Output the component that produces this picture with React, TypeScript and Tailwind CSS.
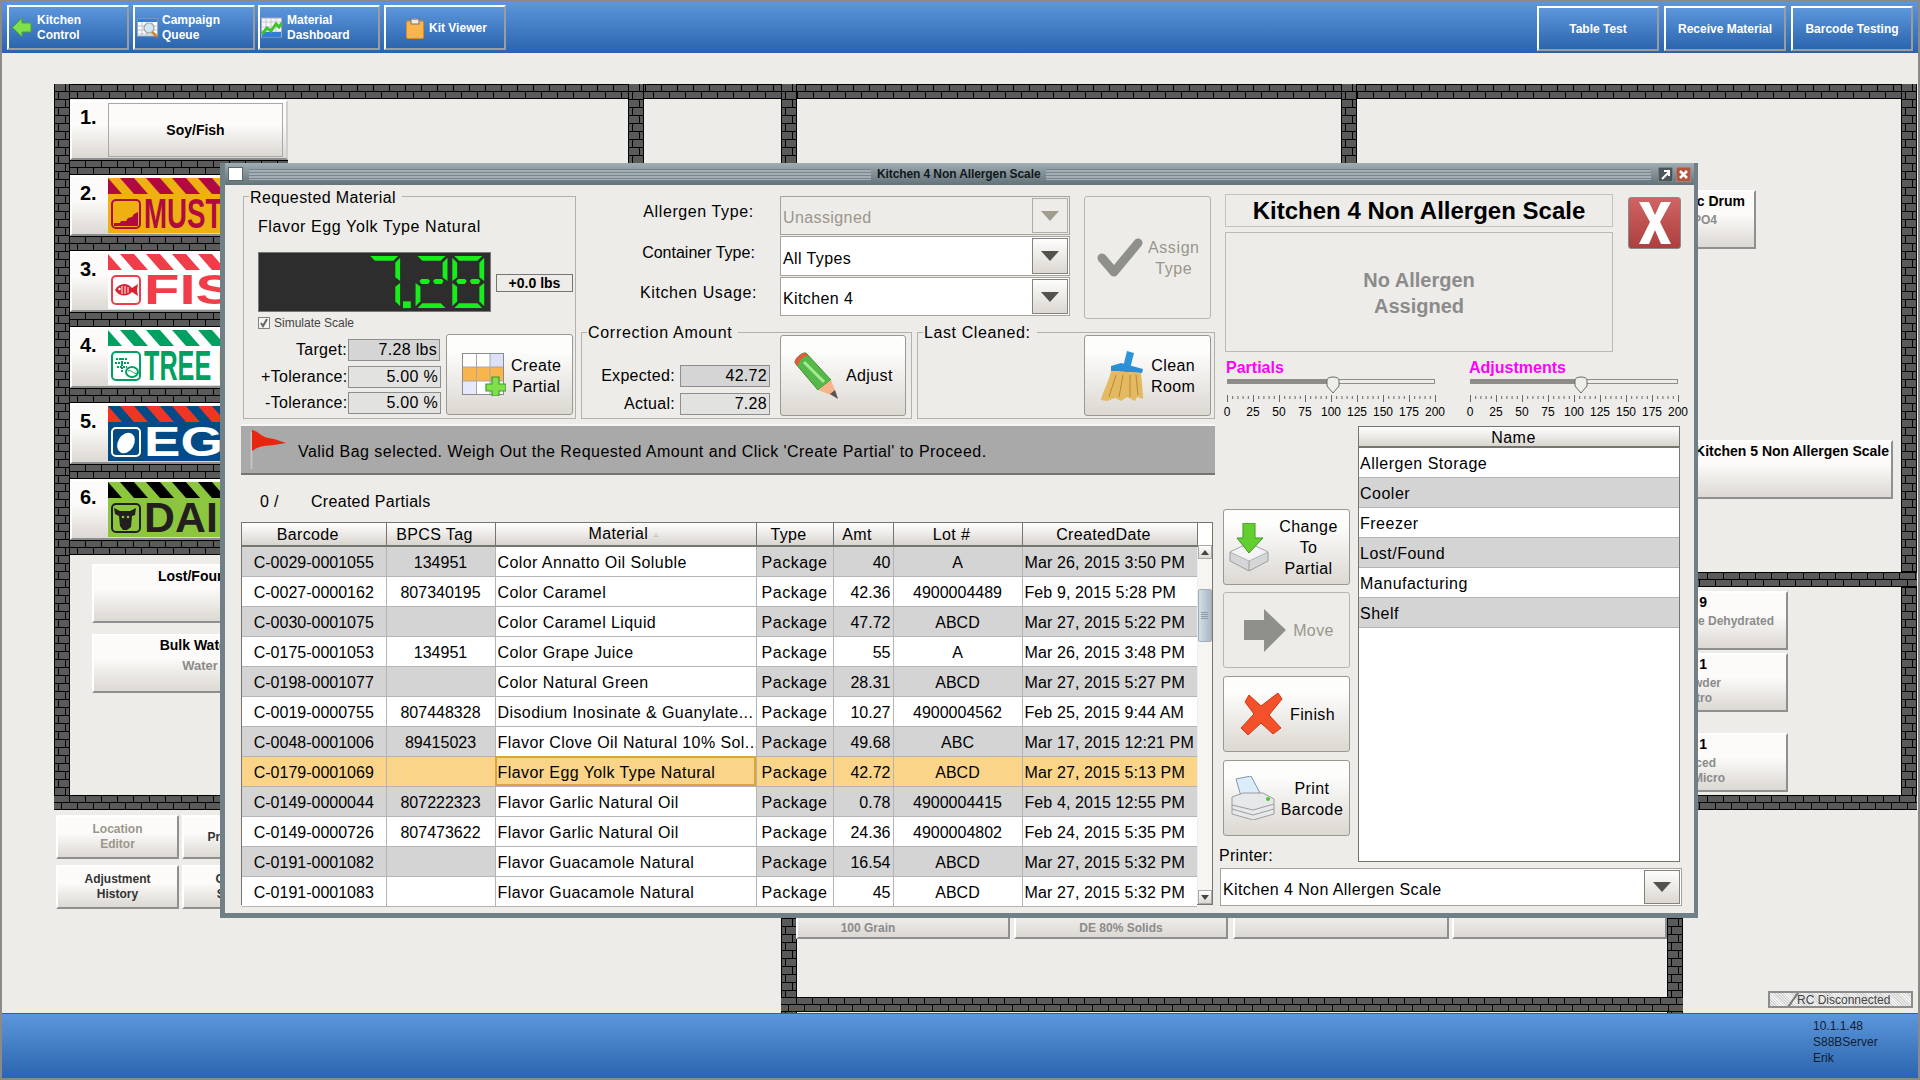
import type { ReactNode } from 'react'

const navGradient = 'bg-gradient-to-b from-[#5c96db] to-[#2b65ae]'
const raised = 'bg-gradient-to-b from-[#fcfbf9] from-40% to-[#dcd8d3]'

const tableRows = [
  ['C-0029-0001055', '134951', 'Color Annatto Oil Soluble', 'Package', '40', 'A', 'Mar 26, 2015 3:50 PM'],
  ['C-0027-0000162', '807340195', 'Color Caramel', 'Package', '42.36', '4900004489', 'Feb 9, 2015 5:28 PM'],
  ['C-0030-0001075', '', 'Color Caramel Liquid', 'Package', '47.72', 'ABCD', 'Mar 27, 2015 5:22 PM'],
  ['C-0175-0001053', '134951', 'Color Grape Juice', 'Package', '55', 'A', 'Mar 26, 2015 3:48 PM'],
  ['C-0198-0001077', '', 'Color Natural Green', 'Package', '28.31', 'ABCD', 'Mar 27, 2015 5:27 PM'],
  ['C-0019-0000755', '807448328', 'Disodium Inosinate & Guanylate...', 'Package', '10.27', '4900004562', 'Feb 25, 2015 9:44 AM'],
  ['C-0048-0001006', '89415023', 'Flavor Clove Oil Natural 10% Sol...', 'Package', '49.68', 'ABC', 'Mar 17, 2015 12:21 PM'],
  ['C-0179-0001069', '', 'Flavor Egg Yolk Type Natural', 'Package', '42.72', 'ABCD', 'Mar 27, 2015 5:13 PM'],
  ['C-0149-0000044', '807222323', 'Flavor Garlic Natural Oil', 'Package', '0.78', '4900004415', 'Feb 4, 2015 12:55 PM'],
  ['C-0149-0000726', '807473622', 'Flavor Garlic Natural Oil', 'Package', '24.36', '4900004802', 'Feb 24, 2015 5:35 PM'],
  ['C-0191-0001082', '', 'Flavor Guacamole Natural', 'Package', '16.54', 'ABCD', 'Mar 27, 2015 5:32 PM'],
  ['C-0191-0001083', '', 'Flavor Guacamole Natural', 'Package', '45', 'ABCD', 'Mar 27, 2015 5:32 PM'],
]

const storageNames = ['Allergen Storage', 'Cooler', 'Freezer', 'Lost/Found', 'Manufacturing', 'Shelf']

function Wall({ className, vertical }: { className: string; vertical?: boolean }) {
  return (
    <svg className={className}>
      <rect width="100%" height="100%" fill={vertical ? 'url(#brick-v)' : 'url(#brick-h)'} />
    </svg>
  )
}

function BrickDefs() {
  return (
    <svg className="absolute h-0 w-0">
      <defs>
        <pattern id="brick-h" width="16" height="15" patternUnits="userSpaceOnUse">
          <rect width="16" height="15" fill="#000" />
          <rect x="0" y="1" width="15" height="6" fill="#5a5a5a" />
          <rect x="0" y="8" width="7" height="6" fill="#5a5a5a" />
          <rect x="8" y="8" width="8" height="6" fill="#5a5a5a" />
        </pattern>
        <pattern id="brick-v" width="16" height="16" patternUnits="userSpaceOnUse">
          <rect width="16" height="16" fill="#000" />
          <rect x="1" y="0" width="10" height="7" fill="#5a5a5a" />
          <rect x="12" y="0" width="3" height="7" fill="#5a5a5a" />
          <rect x="1" y="8" width="3" height="7" fill="#5a5a5a" />
          <rect x="5" y="8" width="10" height="7" fill="#5a5a5a" />
        </pattern>
      </defs>
    </svg>
  )
}

// top bar icons
function BackIcon() {
  return (
    <svg width="20" height="21" viewBox="0 0 20 21" className="shrink-0">
      <path d="M10 1 L0.5 10.5 L10 20 L10 15 L19 15 L19 6 L10 6 Z" fill="#7fe04a" stroke="#4aa52a" />
    </svg>
  )
}

function QueueIcon() {
  return (
    <svg width="22" height="20" viewBox="0 0 22 20" className="shrink-0">
      <rect x="0.5" y="1" width="20" height="17" fill="#fff" stroke="#9ab" />
      <rect x="0.5" y="1" width="20" height="3" fill="#2e7fe0" />
      <path d="M5 4V18M10 4V18M15 4V18M1 8H20M1 12H20M1 16H20" stroke="#b8bfd0" />
      <circle cx="12" cy="10" r="5" fill="#cfe6fa" stroke="#a8a090" strokeWidth="1.2" />
      <path d="M15.5 14 L20 19" stroke="#d97b18" strokeWidth="2.5" />
    </svg>
  )
}

function ChartIcon() {
  return (
    <svg width="22" height="21" viewBox="0 0 22 21" className="shrink-0">
      <rect x="0.5" y="1" width="20" height="19" fill="#f6f6f6" stroke="#aab" />
      <path d="M5 1V20M10 1V20M15 1V20M1 5H20M1 10H20M1 15H20" stroke="#c5c8d0" />
      <path d="M1 15 H20 V20 H1 Z" fill="#2f7fd8" />
      <path d="M1 17 L6 11 L10 14 L15 7 L18 10 L21 6" fill="none" stroke="#3ec22e" strokeWidth="3" />
    </svg>
  )
}

function ClipboardIcon() {
  return (
    <svg width="18" height="21" viewBox="0 0 18 21" className="shrink-0">
      <rect x="0.5" y="3" width="17" height="17.5" rx="1.5" fill="#f9b64e" stroke="#d98a22" />
      <rect x="5" y="1" width="8" height="5" fill="#ececec" stroke="#777" />
      <rect x="7.5" y="0" width="3" height="2" fill="#999" />
    </svg>
  )
}

function TopButton({ className, children }: { className: string; children: ReactNode }) {
  return (
    <div
      className={`flex h-[45px] items-center border-2 border-t-white border-l-white border-r-[#9c9c9c] border-b-[#9c9c9c] text-[12px] leading-[15px] font-bold text-white ${navGradient} ${className}`}
    >
      {children}
    </div>
  )
}

function TopBar() {
  return (
    <div className={`flex h-[51px] shrink-0 border-b border-[#2f5fa8] pt-[3px] pl-[5px] ${navGradient}`}>
      <TopButton className="w-[122px] gap-[5px] pl-[3px]">
        <BackIcon />
        <span>Kitchen<br />Control</span>
      </TopButton>
      <TopButton className="ml-[4px] w-[122px] gap-[3px] pl-[2px]">
        <QueueIcon />
        <span>Campaign<br />Queue</span>
      </TopButton>
      <TopButton className="ml-[3px] w-[122px] gap-[4px] pl-[1px]">
        <ChartIcon />
        <span>Material<br />Dashboard</span>
      </TopButton>
      <TopButton className="ml-[4px] w-[122px] gap-[5px] pt-[1px] pl-[20px]">
        <ClipboardIcon />
        <span>Kit Viewer</span>
      </TopButton>
      <div className="ml-auto flex gap-[5px] pr-[5px] pt-[1px]">
        <TopButton className="w-[122px] justify-center pt-[2px]">Table Test</TopButton>
        <TopButton className="w-[122px] justify-center pt-[2px]">Receive Material</TopButton>
        <TopButton className="w-[122px] justify-center pt-[2px]">Barcode Testing</TopButton>
      </div>
    </div>
  )
}

function BottomBar() {
  return (
    <div className={`flex h-[65px] shrink-0 justify-end border-t border-[#2f5fa8] pt-[4px] text-[12px] leading-[16px] text-[#101c30] ${navGradient}`}>
      <div className="w-[105px]">
        <p>10.1.1.48</p>
        <p>S88BServer</p>
        <p>Erik</p>
      </div>
    </div>
  )
}

// allergen banners
const banners = [
  {
    n: '2.',
    label: 'MUSTARD',
    stripe: '#b00a41',
    box: 'bg-[#eeb111]',
    text: 'text-[#b00a41] scale-x-[0.66]',
    icon: (
      <svg width="30" height="30" viewBox="0 0 30 30">
        <rect x="1" y="1" width="28" height="28" rx="4" fill="#eeb111" stroke="#b00a41" strokeWidth="2" />
        <path d="M3 27 L3 24 L9 24 L10 22 L15 22 L17 19 L21 18 L23 15 L27 13 L27 27 Z" fill="#b00a41" />
      </svg>
    ),
  },
  {
    n: '3.',
    label: 'FISH',
    stripe: '#ef3e4a',
    box: 'bg-white',
    text: 'text-[#ef3e4a] scale-x-[1.38]',
    icon: (
      <svg width="30" height="30" viewBox="0 0 30 30">
        <rect x="1" y="1" width="28" height="28" rx="4" fill="#fff" stroke="#ef3e4a" strokeWidth="2" />
        <path d="M4 15 C8 8 16 7 21 13 L27 9 L26 15 L27 21 L21 17 C17 22 8 22 4 15 Z" fill="#d9232e" />
        <circle cx="8.5" cy="14" r="1.2" fill="#fff" />
        <path d="M11 11V19M14 11V19M17 12V18" stroke="#fff" />
      </svg>
    ),
  },
  {
    n: '4.',
    label: 'TREE NUTS',
    stripe: '#00a160',
    box: 'bg-white',
    text: 'text-[#00a160] scale-x-[0.6]',
    icon: (
      <svg width="30" height="30" viewBox="0 0 30 30">
        <rect x="1" y="1" width="28" height="28" rx="4" fill="#fff" stroke="#00a160" strokeWidth="2" />
        <path d="M11 21 V6 M5 8 L17 8 M4 12 L18 12 M6 16 L16 16" stroke="#00a160" strokeWidth="2" strokeDasharray="2 1" />
        <ellipse cx="21" cy="21" rx="6" ry="5" fill="none" stroke="#00a160" strokeWidth="2" />
        <path d="M17 20 C20 18 23 24 26 22" fill="none" stroke="#00a160" />
      </svg>
    ),
  },
  {
    n: '5.',
    label: 'EGG',
    stripe: '#ef3524',
    box: 'bg-[#034b87]',
    text: 'text-white scale-x-[1.3]',
    icon: (
      <svg width="30" height="30" viewBox="0 0 30 30">
        <rect x="1" y="1" width="28" height="28" rx="4" fill="#034b87" stroke="#fff" strokeWidth="2" />
        <ellipse cx="15" cy="16" rx="8" ry="11" fill="#fff" transform="rotate(30 15 16)" />
      </svg>
    ),
  },
  {
    n: '6.',
    label: 'DAIRY',
    stripe: '#000',
    box: 'bg-[#8cc63f]',
    text: 'text-[#231f20] scale-x-[1.02]',
    icon: (
      <svg width="30" height="30" viewBox="0 0 30 30">
        <rect x="1" y="1" width="28" height="28" rx="4" fill="#8cc63f" stroke="#231f20" strokeWidth="2" />
        <path d="M3 5 L9 8 L19 8 L25 5 L24 12 L21 13 L20 24 L16 27 L12 27 L9 23 L8 13 L4 11 Z" fill="#231f20" />
        <circle cx="12" cy="14" r="1.3" fill="#8cc63f" />
        <circle cx="17" cy="14" r="1.3" fill="#8cc63f" />
      </svg>
    ),
  },
]

function Banner({ b }: { b: (typeof banners)[number] }) {
  return (
    <div className={`h-[55px] w-[175px] overflow-hidden ${b.box}`}>
      <svg width="175" height="16" className="block">
        {Array.from({ length: 9 }, (_, i) => (
          <polygon key={i} points={`${i * 26 - 14},0 ${i * 26},0 ${i * 26 + 14},16 ${i * 26},16`} fill={b.stripe} />
        ))}
      </svg>
      <div className="flex h-[39px] items-center gap-[3px] pl-[3px]">
        <div className="shrink-0">{b.icon}</div>
        <span className={`origin-left text-[42px] leading-none font-bold whitespace-nowrap ${b.text}`}>{b.label}</span>
      </div>
    </div>
  )
}

function AllergenColumn() {
  return (
    <div className="absolute top-[47px] left-[68px] flex w-[218px] flex-col">
      <div className={`flex h-[60px] w-[218px] items-center border-t-2 border-l-2 border-white border-b-2 border-r-2 border-b-[#8d8d8d] border-r-[#cfcfcf] ${raised}`}>
        <span className="mt-[-26px] ml-[8px] w-[28px] text-[20px] font-bold">1.</span>
        <div className={`flex h-[54px] w-[175px] items-center justify-center border border-[#a8a8a8] text-[14px] font-bold ${raised}`}>
          Soy/Fish
        </div>
      </div>
      <Wall className="h-[15px] w-full" />
      {banners.map((b) => (
        <div key={b.n}>
          <div className={`flex h-[61px] w-[218px] items-center border-t-2 border-l-2 border-white border-b-2 border-b-[#8d8d8d] ${raised}`}>
            <span className="mt-[-26px] ml-[8px] w-[28px] text-[20px] font-bold">{b.n}</span>
            <Banner b={b} />
          </div>
          <Wall className="block h-[15px] w-full" />
        </div>
      ))}
    </div>
  )
}

function FloorButton({ className, children }: { className: string; children?: ReactNode }) {
  return (
    <div className={`absolute flex flex-col border-2 border-t-white border-l-white border-r-[#8f8f8f] border-b-[#8f8f8f] font-bold ${raised} ${className}`}>
      {children}
    </div>
  )
}

function FloorPlan() {
  return (
    <div className="relative flex-1">
      {/* outer walls and rooms */}
      <Wall className="absolute top-[31px] left-[52px] h-[15px] w-[1862px]" />
      <Wall vertical className="absolute top-[31px] left-[52px] h-[725px] w-[16px]" />
      <Wall vertical className="absolute top-[31px] left-[1899px] h-[725px] w-[16px]" />
      <Wall className="absolute top-[742px] left-[52px] h-[15px] w-[300px]" />
      <Wall className="absolute top-[742px] left-[1690px] h-[15px] w-[225px]" />
      <Wall className="absolute top-[519px] left-[1690px] h-[15px] w-[225px]" />
      <Wall vertical className="absolute top-[31px] left-[626px] h-[100px] w-[16px]" />
      <Wall vertical className="absolute top-[31px] left-[779px] h-[100px] w-[16px]" />
      <Wall vertical className="absolute top-[31px] left-[1339px] h-[100px] w-[16px]" />
      <Wall vertical className="absolute top-[850px] left-[779px] h-[110px] w-[16px]" />
      <Wall vertical className="absolute top-[850px] left-[1665px] h-[110px] w-[16px]" />
      <Wall className="absolute top-[944px] left-[779px] h-[15px] w-[902px]" />

      <AllergenColumn />

      <FloorButton className="top-[511px] left-[90px] h-[59px] w-[208px] items-center pt-[2px] text-[14px] leading-[16px]">Lost/Found</FloorButton>
      <FloorButton className="top-[581px] left-[90px] h-[59px] w-[208px] items-center pt-[1px] text-[14px] leading-[16px]">
        <span>Bulk Water</span>
        <span className="mt-[5px] ml-[8px] text-[13px] text-[#8b8b8b]">Water</span>
      </FloorButton>

      <FloorButton className="top-[762px] left-[54px] h-[44px] w-[123px] items-center justify-center text-[12px] leading-[15px] text-[#9a968a]">
        <span>Location</span>
        <span>Editor</span>
      </FloorButton>
      <FloorButton className="top-[812px] left-[54px] h-[44px] w-[123px] items-center justify-center text-[12px] leading-[15px] text-[#333]">
        <span>Adjustment</span>
        <span>History</span>
      </FloorButton>
      <FloorButton className="top-[762px] left-[180px] h-[44px] w-[123px] items-center justify-center pr-[4px] text-[12px] leading-[15px] text-[#333]">
        Print Queue
      </FloorButton>
      <FloorButton className="top-[812px] left-[180px] h-[44px] w-[123px] items-center justify-center text-[12px] leading-[15px] text-[#333]">
        <span>Container</span>
        <span>Schedule</span>
      </FloorButton>

      <FloorButton className="top-[827px] left-[794px] h-[59px] w-[214px] items-center justify-end pr-[70px] text-[12px] leading-[18px] text-[#8b8b8b]">100 Grain</FloorButton>
      <FloorButton className="top-[827px] left-[1012px] h-[59px] w-[214px] items-center justify-end text-[12px] leading-[18px] text-[#8b8b8b]">DE 80% Solids</FloorButton>
      <FloorButton className="top-[827px] left-[1231px] h-[59px] w-[216px]" />
      <FloorButton className="top-[827px] left-[1450px] h-[59px] w-[215px]" />

      <FloorButton className="top-[137px] left-[1560px] h-[59px] w-[194px] items-end text-[14px] leading-[18px]">
        <span className="mr-[9px]">Citric Drum</span>
        <span className="mt-[1px] mr-[37px] text-[12px] text-[#8b8b8b]">H3PO4</span>
      </FloorButton>
      <FloorButton className="top-[387px] left-[1680px] h-[59px] w-[211px] items-end pt-[1px] text-[14px] leading-[16px]">
        <span className="mr-[2px] whitespace-nowrap">Kitchen 5 Non Allergen Scale</span>
      </FloorButton>
      <FloorButton className="top-[538px] left-[1620px] h-[59px] w-[166px] items-end text-[12px] leading-[15px]">
        <span className="mr-[79px] text-[14px] leading-[18px]">9</span>
        <span className="mt-[3px] mr-[12px] text-[#8b8b8b]">Whole Dehydrated</span>
      </FloorButton>
      <FloorButton className="top-[600px] left-[1620px] h-[59px] w-[166px] items-end text-[12px] leading-[15px]">
        <span className="mr-[79px] text-[14px] leading-[18px]">1</span>
        <span className="mt-[3px] mr-[65px] text-[#8b8b8b]">Powder</span>
        <span className="mr-[74px] text-[#8b8b8b]">Nitro</span>
      </FloorButton>
      <FloorButton className="top-[680px] left-[1620px] h-[59px] w-[166px] items-end text-[12px] leading-[15px]">
        <span className="mr-[79px] text-[14px] leading-[18px]">1</span>
        <span className="mt-[3px] mr-[70px] text-[#8b8b8b]">Reduced</span>
        <span className="mr-[61px] text-[#8b8b8b]">Micro</span>
      </FloorButton>

      {/* RC status */}
      <div className="absolute top-[938px] left-[1766px] flex h-[17px] w-[145px] items-center overflow-hidden border-2 border-[#8c8c8c] bg-[repeating-linear-gradient(45deg,#d4d4d4_0,#d4d4d4_1px,#f4f4f4_1px,#f4f4f4_2px)] pl-[27px] text-[12px] text-[#444]">
        <span className="absolute left-[22px] h-[24px] w-[2px] rotate-[35deg] bg-[#777]" />
        RC Disconnected
      </div>
    </div>
  )
}

function WindowTitle() {
  const stripes =
    'h-[11px] bg-[repeating-linear-gradient(to_bottom,#76868c_0,#76868c_1px,#a3afb4_1px,#a3afb4_3px)]'
  return (
    <div className="flex h-[22px] shrink-0 items-center bg-gradient-to-b from-[#a0adb2] to-[#63737a] pr-[3px] pl-[3px]">
      <div className="h-[14px] w-[15px] border border-[#5b6a70] bg-white" />
      <div className={`ml-[6px] w-[622px] ${stripes}`} />
      <span className="px-[6px] text-[12px] font-bold tracking-[-0.1px] whitespace-nowrap text-[#10181c]">Kitchen 4 Non Allergen Scale</span>
      <div className={`mr-[7px] flex-1 ${stripes}`} />
      <svg width="15" height="15" viewBox="0 0 15 15" className="mr-[3px]">
        <rect width="15" height="15" fill="#4b565a" stroke="#9aa" />
        <path d="M4 12 L11 5 M6 4 H11 V9" stroke="#fff" strokeWidth="2" fill="none" />
      </svg>
      <svg width="15" height="15" viewBox="0 0 15 15">
        <rect width="15" height="15" fill="#b5533f" stroke="#9aa" />
        <path d="M4 4 L11 11 M11 4 L4 11" stroke="#fff" strokeWidth="2.5" />
      </svg>
    </div>
  )
}

function Group({ title, legend, className, children }: { title: string; legend: string; className: string; children: ReactNode }) {
  return (
    <div className={`relative border border-[#b3b1ab] ${className}`}>
      <span className={`absolute left-[5px] bg-[#edece8] px-[1px] pr-[6px] text-[16px] leading-[20px] whitespace-nowrap ${legend}`}>{title}</span>
      {children}
    </div>
  )
}

function ActionButton({ className, disabled, children }: { className: string; disabled?: boolean; children: ReactNode }) {
  const tone = disabled
    ? 'border-[#b9b6ae] bg-[#edece8] text-[#9a968a]'
    : 'border-[#9b988f] bg-gradient-to-b from-[#fdfdfc] from-20% to-[#dcd8d2] text-black'
  return (
    <div className={`flex items-center rounded-[3px] border text-[16px] leading-[21px] tracking-[0.4px] ${tone} ${className}`}>
      {children}
    </div>
  )
}

function Combo({ text, disabled, className }: { text: string; disabled?: boolean; className: string }) {
  const bg = disabled ? 'bg-[#edece8] text-[#9a968a]' : 'bg-white text-black'
  return (
    <div className={`flex items-center justify-between border border-[#a6a39c] p-[1px] ${bg} ${className}`}>
      <span className={`pl-[1px] text-[16px] tracking-[0.4px] ${disabled ? 'pt-[4px]' : 'pt-[5px]'}`}>{text}</span>
      <div className={`flex h-full w-[36px] items-center justify-center border border-[#85827b] ${disabled ? 'border-[#b0ada5]' : 'bg-gradient-to-b from-[#fdfdfc] to-[#dcd8d2]'}`}>
        <svg width="18" height="10" viewBox="0 0 18 10">
          <polygon points="0,0 18,0 9,10" fill={disabled ? '#a09c90' : '#55524c'} />
        </svg>
      </div>
    </div>
  )
}

function Lcd() {
  const green = '#17ef1b'
  const segs = {
    a: '2,0 31,0 26,5 7,5',
    f: '0,2 5,7 5,22 0,26',
    b: '33,2 33,26 28,22 28,7',
    m1: '4,26 6,24 13,24 15,26 13,29 6,29',
    m2: '18,26 20,24 27,24 29,26 27,29 20,29',
    e: '0,28 5,32 5,47 0,52',
    c: '33,28 33,52 28,47 28,32',
    d: '7,49 26,49 31,54 2,54',
  }
  const digit = (x: number, keys: (keyof typeof segs)[]) => (
    <g transform={`translate(${x} 3)`}>
      {keys.map((k) => (
        <polygon key={k} points={segs[k]} fill={green} />
      ))}
    </g>
  )
  return (
    <svg width="233" height="60" viewBox="0 0 233 60" className="shrink-0 border border-[#777] bg-[#2d2d2d]">
      {digit(110, ['a', 'b', 'c'])}
      <rect x="146" y="50" width="8" height="7" fill={green} />
      {digit(159, ['a', 'b', 'm1', 'm2', 'e', 'd'])}
      {digit(197, ['a', 'b', 'f', 'm1', 'm2', 'c', 'e', 'd'])}
    </svg>
  )
}

function ReadField({ value, className }: { value: string; className: string }) {
  return (
    <div className={`flex h-[22px] items-center justify-end border border-[#8e8e8e] pr-[2px] text-[16px] tracking-[0.3px] ${className}`}>{value}</div>
  )
}

function GridPlusIcon() {
  return (
    <svg width="44" height="43" viewBox="0 0 44 43" className="shrink-0">
      <rect x="0.5" y="0.5" width="41" height="41" fill="#fff" stroke="#8b8b8b" />
      <rect x="28" y="1" width="13" height="13" fill="#dde0f6" />
      <rect x="1" y="28" width="13" height="13" fill="#e6e8fb" />
      <rect x="1" y="14" width="40" height="14" fill="#f9b44b" />
      <path d="M14.5 1V41M28 1V41M1 14H41M1 28H41" stroke="#a8a8a8" />
      <path d="M30 24H37V31H44V38H37V43H30V38H24V31H30Z" fill="#7fe04a" stroke="#3c9a2a" strokeWidth="1.2" />
    </svg>
  )
}

function PencilIcon() {
  return (
    <svg width="46" height="48" viewBox="0 0 46 48" className="shrink-0">
      <path d="M1 11 C0 7 8 0 12 1 L37 28 L24 38 Z" fill="#56b848" stroke="#3a8f32" />
      <path d="M1 11 C0 7 8 0 12 1 L14 4 C9 4 5 9 4 14 Z" fill="#e8583a" />
      <path d="M24 38 L37 28 L44 46 Z" fill="#f6b48a" />
      <path d="M36 42 L41 38 L44 47 Z" fill="#555" />
      <path d="M10 10 L30 30" stroke="#a4ec94" strokeWidth="3" />
    </svg>
  )
}

function BroomIcon() {
  return (
    <svg width="42" height="50" viewBox="0 0 42 50" className="shrink-0">
      <path d="M26 0 L33 2 L29 18 L22 16 Z" fill="#2f93d8" />
      <path d="M10 15 L20 12 L42 18 L41 22 L10 20 Z" fill="#2a8fd6" />
      <path d="M10 20 L40 22 C41 32 42 42 42 48 L36 46 L34 50 L26 46 L20 50 L14 47 L6 50 L0 49 C2 40 8 30 10 20 Z" fill="#e3b961" />
      <path d="M15 24 L8 46 M22 24 L18 46 M29 24 L29 46 M35 24 L37 44" stroke="#b78a35" />
    </svg>
  )
}

function CheckIcon() {
  return (
    <svg width="46" height="42" viewBox="0 0 46 42" className="shrink-0">
      <path d="M5 21 L17 35 L41 6" fill="none" stroke="#8f8f8b" strokeWidth="9" strokeLinecap="round" strokeLinejoin="round" />
    </svg>
  )
}

function BoxArrowIcon() {
  return (
    <svg width="40" height="48" viewBox="0 0 40 48" className="shrink-0">
      <path d="M20 20 L39 29 V38 L20 48 L1 38 V29 Z" fill="#d4d6d8" stroke="#9a9c9f" />
      <path d="M1 29 L20 38 L39 29 L20 20 Z" fill="#f4f4f4" stroke="#b0b2b4" />
      <path d="M20 38 V48" stroke="#9a9c9f" />
      <path d="M14 0 H26 V15 H34 L20 30 L8 15 H14 Z" fill="#62cf2f" stroke="#3c9a22" />
    </svg>
  )
}

function MoveArrowIcon() {
  return (
    <svg width="42" height="43" viewBox="0 0 42 43" className="shrink-0">
      <path d="M0 11 H20 V0 L42 21 L20 43 V31 H0 Z" fill="#8f8f8b" />
    </svg>
  )
}

function RedCrossIcon() {
  return (
    <svg width="42" height="42" viewBox="0 0 42 42" className="shrink-0">
      <path d="M8 2 L20 13 L37 0 L41 6 L28 22 L40 35 L32 41 L20 30 L7 42 L0 35 L13 21 L4 9 Z" fill="#f4502a" stroke="#c83a18" />
    </svg>
  )
}

function PrinterIcon() {
  return (
    <svg width="44" height="44" viewBox="0 0 44 44" className="shrink-0">
      <path d="M5 3 L20 0 L29 17 L10 20 Z" fill="#dcecfb" stroke="#7d97ad" />
      <path d="M1 21 L12 17 L32 17 L43 23 V38 L22 44 L1 38 Z" fill="#e6e8ea" stroke="#9a9c9f" />
      <path d="M1 29 L22 34 L43 28 M1 33 L22 39 L43 33" stroke="#9a9c9f" fill="none" />
      <circle cx="37" cy="23" r="2" fill="#4cc438" />
    </svg>
  )
}

function FlagIcon() {
  return (
    <svg width="36" height="40" viewBox="0 0 36 40" className="shrink-0">
      <path d="M1.5 2 V39" stroke="#c4c4c4" strokeWidth="2" />
      <path d="M2 0 C8 1 10 6 18 8 L24 9 L36 13 L24 15 C16 16 10 15 2 21 Z" fill="#e8260f" />
    </svg>
  )
}

function Table() {
  const heads = ['Barcode', 'BPCS Tag', 'Material', 'Type', 'Amt', 'Lot #', 'CreatedDate']
  const align = [
    'text-center',
    'text-center',
    'text-left pl-[2px] tracking-[0.42px]',
    'text-center tracking-[0.5px]',
    'text-right pr-[2px]',
    'text-center',
    'text-left pl-[2px] tracking-[0.1px]',
  ]
  return (
    <div className="flex h-[383px] w-[972px] border border-[#77756f]">
      <table className="w-[955px] table-fixed self-start text-[16px] leading-[20px]">
        <colgroup>
          <col className="w-[144px]" />
          <col className="w-[109px]" />
          <col className="w-[261px]" />
          <col className="w-[77px]" />
          <col className="w-[60px]" />
          <col className="w-[129px]" />
          <col className="w-[175px]" />
        </colgroup>
        <thead>
          <tr className="h-[22px]">
            {heads.map((h) => (
              <th
                key={h}
                className={`border-r border-b-2 border-[#77756f] bg-gradient-to-b from-white to-[#d9d5cf] p-0 pt-[1px] font-normal tracking-[0.35px] ${h === 'Material' ? 'pr-[4px]' : 'pr-[12px]'}`}
              >
                {h}
                {h === 'Material' && <span className="ml-[6px] align-[2px] text-[8px] text-[#aaa]">▵</span>}
              </th>
            ))}
          </tr>
        </thead>
        <tbody>
          {tableRows.map((row, i) => {
            const selected = row[2] === 'Flavor Egg Yolk Type Natural'
            const rowBg = selected ? 'bg-[#fad488]' : i % 2 === 0 ? 'bg-[#d4d4d4]' : 'bg-white'
            return (
              <tr key={row[0]} className="h-[30px]">
                {row.map((cell, c) => (
                  <td
                    key={c}
                    className={`overflow-hidden border-r border-b border-[#b4b4b4] p-0 pt-[3px] whitespace-nowrap last:border-r-0 ${align[c]} ${
                      c === 2 ? (selected ? 'bg-[#fad488] outline-2 -outline-offset-2 outline-[#d8a63a]' : 'bg-white') : rowBg
                    }`}
                  >
                    {cell}
                  </td>
                ))}
              </tr>
            )
          })}
        </tbody>
      </table>
      <div className="flex flex-1 flex-col bg-[#f6f5f2]">
        <div className="h-[22px] bg-white" />
        <div className="flex h-[14px] items-center justify-center border border-[#aaa] bg-gradient-to-b from-white to-[#dcd8d2]">
          <svg width="8" height="5"><polygon points="0,5 8,5 4,0" fill="#444" /></svg>
        </div>
        <div className="mt-[30px] flex h-[53px] flex-col items-center justify-center gap-[1px] rounded-[2px] border border-[#9fb0bc] bg-gradient-to-r from-[#d4dde3] to-[#a8b8c3]">
          <div className="h-px w-[7px] bg-[#8d9da8]" />
          <div className="h-px w-[7px] bg-[#8d9da8]" />
          <div className="h-px w-[7px] bg-[#8d9da8]" />
          <div className="h-px w-[7px] bg-[#8d9da8]" />
        </div>
        <div className="flex-1" />
        <div className="flex h-[14px] items-center justify-center border border-[#aaa] bg-gradient-to-b from-white to-[#dcd8d2]">
          <svg width="8" height="5"><polygon points="0,0 8,0 4,5" fill="#444" /></svg>
        </div>
      </div>
    </div>
  )
}

function Slider({ title, className, fill, thumb }: { title: string; className: string; fill: string; thumb: string }) {
  const ticks = Array.from({ length: 41 }, (_, i) => i)
  const labels = ['0', '25', '50', '75', '100', '125', '150', '175', '200']
  return (
    <div className={`w-[208px] ${className}`}>
      <p className="-ml-[1px] h-[21px] text-[16px] leading-[20px] font-bold text-[#ff00ff]">{title}</p>
      <div className="relative h-[5px] border border-[#8f8d87] bg-[#edece8]">
        <div className={`h-full bg-[#8d8d88] ${fill}`} />
        <svg width="14" height="18" viewBox="0 0 14 18" className={`absolute -top-[5px] ${thumb}`}>
          <path d="M1 5 C1 1 13 1 13 5 V11 L7 18 L1 11 Z" fill="#eeeeea" stroke="#6b6b66" />
        </svg>
      </div>
      <svg width="210" height="8" className="mt-[11px] block">
        {ticks.map((t) => (
          <line key={t} x1={t * 5.2 + 0.5} x2={t * 5.2 + 0.5} y1={t % 5 === 0 ? 0 : 1} y2={t % 5 === 0 ? 7 : 4} stroke="#666" />
        ))}
      </svg>
      <div className="mt-[2px] -mr-[13px] -ml-[13px] flex justify-between text-[12px] leading-[14px]">
        {labels.map((l) => (
          <span key={l} className="w-[26px] text-center">{l}</span>
        ))}
      </div>
    </div>
  )
}

function RequestedMaterial() {
  return (
    <Group title="Requested Material" legend="-top-[9px] tracking-[0.4px]" className="ml-[2px] h-[223px] w-[333px] pl-[14px]">
      <p className="pt-[20px] text-[16px] leading-[20px] tracking-[0.6px]">Flavor Egg Yolk Type Natural</p>
      <div className="mt-[15px] flex items-center gap-[5px]">
        <Lcd />
        <div className="mt-[2px] flex h-[18px] w-[77px] items-center justify-center border border-[#77756f] text-[14px] font-bold">+0.0 lbs</div>
      </div>
      <div className="mt-[4px] flex h-[13px] items-center gap-[4px] text-[12px] text-[#444]">
        <svg width="12" height="12" viewBox="0 0 12 12">
          <rect x="0.5" y="0.5" width="11" height="11" fill="#f4f4f2" stroke="#85827b" />
          <path d="M3 6 L5 9 L9 2" fill="none" stroke="#666" strokeWidth="2" />
        </svg>
        Simulate Scale
      </div>
      <div className="mt-[5px] flex">
        <div className="flex w-[183px] flex-col gap-[4.5px] pt-[5px]">
          <div className="flex items-center">
            <span className="w-[90px] pr-[1px] text-right text-[16px] leading-[22px] tracking-[0.3px]">Target:</span>
            <ReadField value="7.28 lbs" className="w-[92px] bg-[#d5d5d5]" />
          </div>
          <div className="flex items-center">
            <span className="w-[90px] text-right text-[16px] leading-[22px] tracking-[0.3px]">+Tolerance:</span>
            <ReadField value="5.00 %" className="w-[94px] bg-[#e2e2e0]" />
          </div>
          <div className="flex items-center">
            <span className="w-[90px] text-right text-[16px] leading-[22px] tracking-[0.3px]">-Tolerance:</span>
            <ReadField value="5.00 %" className="w-[94px] bg-[#e2e2e0]" />
          </div>
        </div>
        <ActionButton className="ml-[5px] h-[81px] w-[127px] gap-[5px] pl-[15px]">
          <GridPlusIcon />
          <span className="pt-[2px] text-center">Create<br />Partial</span>
        </ActionButton>
      </div>
    </Group>
  )
}

function TypeSelectors() {
  const rows = [
    { label: 'Allergen Type:', text: 'Unassigned', disabled: true, h: 'h-[39px]', lab: 'pb-[7px] tracking-[0.6px]' },
    { label: 'Container Type:', text: 'All Types', disabled: false, h: 'h-[40px]', lab: 'pb-[7px] tracking-[0px]' },
    { label: 'Kitchen Usage:', text: 'Kitchen 4', disabled: false, h: 'h-[39px]', lab: 'pb-[8px] tracking-[0.6px]' },
  ]
  return (
    <div className="flex w-[489px] flex-col gap-[1px]">
      {rows.map((r) => (
        <div key={r.label} className={`flex items-center ${r.h}`}>
          <span className={`w-[199px] pl-[36px] text-center text-[16px] ${r.lab}`}>{r.label}</span>
          <Combo text={r.text} disabled={r.disabled} className="h-full w-[290px]" />
        </div>
      ))}
    </div>
  )
}

function CorrectionGroups() {
  return (
    <div className="mt-[13px] flex h-[87px] gap-[5px]">
      <Group title="Correction Amount" legend="-top-[10px] tracking-[0.7px]" className="flex w-[331px] justify-end pt-[2px] pr-[5px]">
        <div className="mr-[10px] flex flex-col gap-[6px] pt-[30px]">
          <div className="flex items-center gap-[5px]">
            <span className="text-[16px] leading-[22px] tracking-[0.3px]">Expected:</span>
            <ReadField value="42.72" className="w-[90px] bg-[#d5d5d5]" />
          </div>
          <div className="flex items-center justify-end gap-[5px]">
            <span className="text-[16px] leading-[22px] tracking-[0.3px]">Actual:</span>
            <ReadField value="7.28" className="w-[90px] bg-[#e2e2e0]" />
          </div>
        </div>
        <ActionButton className="h-[81px] w-[126px] gap-[6px] pl-[13px]">
          <PencilIcon />
          <span>Adjust</span>
        </ActionButton>
      </Group>
      <Group title="Last Cleaned:" legend="-top-[10px] tracking-[0.6px]" className="flex w-[298px] justify-end pt-[2px] pr-[3px]">
        <ActionButton className="h-[81px] w-[127px] gap-[8px] pl-[16px]">
          <BroomIcon />
          <span className="text-center">Clean<br />Room</span>
        </ActionButton>
      </Group>
    </div>
  )
}

function LeftPane() {
  return (
    <div className="ml-[16px] flex w-[974px] flex-col pt-[11px]">
      <div className="flex h-[223px]">
        <RequestedMaterial />
        <div className="ml-[5px] w-[634px]">
          <div className="flex h-[123px]">
            <TypeSelectors />
            <ActionButton disabled className="ml-[14px] h-[123px] w-[127px] gap-[5px] pl-[12px]">
              <CheckIcon />
              <span className="text-center tracking-[0.6px]">Assign<br />Type</span>
            </ActionButton>
          </div>
          <CorrectionGroups />
        </div>
      </div>
      <div className="mt-[5px] flex h-[51px] items-center gap-[12px] border-t-2 border-b-2 border-t-[#f7f6f3] border-b-[#77756f] bg-[#a9a9a9] pl-[9px] text-[16px] tracking-[0.46px]">
        <FlagIcon />
        <span className="pt-[4px]">Valid Bag selected. Weigh Out the Requested Amount and Click &apos;Create Partial&apos; to Proceed.</span>
      </div>
      <div className="flex h-[47px] items-center pt-[6px] pl-[19px] text-[16px] tracking-[0.3px]">
        <span className="w-[51px]">0 /</span>
        <span>Created Partials</span>
      </div>
      <Table />
    </div>
  )
}

function RightPane() {
  return (
    <div className="ml-[4px] flex w-[463px] flex-col pt-[9px]">
      <div className="flex h-[158px] pl-[6px]">
        <div className="w-[388px]">
          <div className="flex h-[33px] items-center justify-center border border-[#c4c2bc] pt-[1px] text-[24px] font-bold">
            Kitchen 4 Non Allergen Scale
          </div>
          <div className="mt-[5px] flex h-[120px] flex-col items-center justify-center border border-[#bcbab4] pt-[2px] text-[20px] leading-[26px] font-bold text-[#8b8b8b]">
            <span>No Allergen</span>
            <span>Assigned</span>
          </div>
        </div>
        <div className="mt-[3px] ml-[15px] flex h-[52px] w-[53px] items-center justify-center rounded-[3px] border border-[#8b8b85] bg-gradient-to-b from-[#cf6464] to-[#ac3f3f]">
          <svg width="32" height="42" viewBox="0 0 32 42">
            <path d="M0 0 H10 L16 13 L22 0 H32 L21 20 L32 42 H22 L16 28 L10 42 H0 L11 20 Z" fill="#fff" />
          </svg>
        </div>
      </div>
      <div className="flex h-[74px] pt-[6px] pl-[8px]">
        <Slider title="Partials" className="" fill="w-[105px]" thumb="left-[98px]" />
        <Slider title="Adjustments" className="ml-[35px]" fill="w-[110px]" thumb="left-[103px]" />
      </div>
      <div className="flex">
        <div className="ml-[4px] flex h-[436px] w-[127px] flex-col gap-[7px] pt-[83px]">
          <ActionButton className="h-[76px] shrink-0 pl-[5px]">
            <BoxArrowIcon />
            <span className="flex-1 pr-[1px] text-center">Change<br />To<br />Partial</span>
          </ActionButton>
          <ActionButton disabled className="h-[76px] shrink-0 pl-[20px]">
            <MoveArrowIcon />
            <span className="flex-1 pr-[8px] text-center">Move</span>
          </ActionButton>
          <ActionButton className="mt-[1px] h-[76px] shrink-0 pl-[17px]">
            <RedCrossIcon />
            <span className="flex-1 pr-[7px] text-center">Finish</span>
          </ActionButton>
          <ActionButton className="mt-[1px] h-[76px] shrink-0 pl-[7px]">
            <PrinterIcon />
            <span className="flex-1 pt-[1px] text-center">Print<br />Barcode</span>
          </ActionButton>
          <span className="mt-[4px] -ml-[4px] text-[16px] leading-[18px] tracking-[0.3px]">Printer:</span>
        </div>
        <div className="ml-[8px] h-[436px] w-[322px] border border-[#77756f] bg-white text-[16px] tracking-[0.5px]">
          <div className="h-[21px] border-b-2 border-[#77756f] bg-gradient-to-b from-white to-[#d9d5cf] pr-[11px] text-center leading-[22px]">Name</div>
          {storageNames.map((name, i) => (
            <div key={name} className={`flex h-[30px] items-center border-b border-[#b4b4b4] pt-[2px] pl-[1px] ${i % 2 === 1 ? 'bg-[#d4d4d4]' : 'bg-white'}`}>
              {name}
            </div>
          ))}
        </div>
      </div>
      <Combo text="Kitchen 4 Non Allergen Scale" className="mt-[6px] ml-[1px] h-[38px] w-[462px]" />
    </div>
  )
}

function ScaleWindow() {
  return (
    <div className="absolute top-[163px] left-[220px] flex h-[755px] w-[1478px] flex-col border-x-[5px] border-b-[5px] border-[#6f8087] border-r-[4px] bg-[#edece8]">
      <WindowTitle />
      <div className="flex flex-1">
        <LeftPane />
        <RightPane />
      </div>
    </div>
  )
}

export default function App() {
  return (
    <div className="relative flex h-[1080px] w-[1920px] flex-col overflow-hidden bg-[#edece8] p-[2px] text-black shadow-[inset_0_0_0_2px_#8c8a86] [font-family:'Liberation_Sans',Arial,sans-serif]">
      <BrickDefs />
      <TopBar />
      <FloorPlan />
      <BottomBar />
      <ScaleWindow />
    </div>
  )
}
